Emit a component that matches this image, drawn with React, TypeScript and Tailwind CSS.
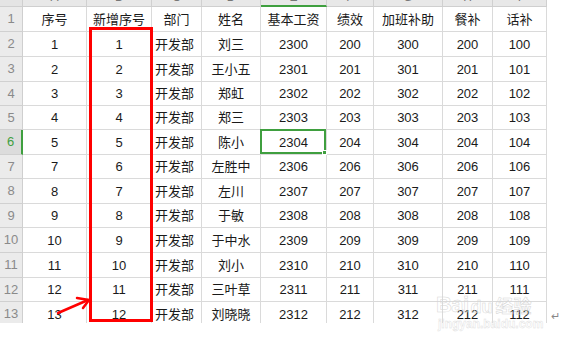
import React from "react";

const cols = [
  { w: "w-[64px]", letter: "A" },
  { w: "w-[65px]", letter: "B" },
  { w: "w-[50px]", letter: "C" },
  { w: "w-[59px]", letter: "D" },
  { w: "w-[66px]", letter: "E" },
  { w: "w-[47px]", letter: "F" },
  { w: "w-[69px]", letter: "G" },
  { w: "w-[50px]", letter: "H" },
  { w: "w-[54px]", letter: "I" },
];

const rowH = [
  "h-[25px]", "h-[25px]", "h-[25px]", "h-[24px]", "h-[24px]", "h-[25px]", "h-[24px]",
  "h-[25px]", "h-[24px]", "h-[25px]", "h-[25px]", "h-[24px]", "h-[25px]",
];

const rows: string[][] = [
  ["序号", "新增序号", "部门", "姓名", "基本工资", "绩效", "加班补助", "餐补", "话补"],
  ["1", "1", "开发部", "刘三", "2300", "200", "300", "200", "100"],
  ["2", "2", "开发部", "王小五", "2301", "201", "301", "201", "101"],
  ["3", "3", "开发部", "郑虹", "2302", "202", "302", "202", "102"],
  ["4", "4", "开发部", "郑三", "2303", "203", "303", "203", "103"],
  ["5", "5", "开发部", "陈小", "2304", "204", "304", "204", "104"],
  ["7", "6", "开发部", "左胜中", "2306", "206", "306", "206", "106"],
  ["8", "7", "开发部", "左川", "2307", "207", "307", "207", "107"],
  ["9", "8", "开发部", "于敏", "2308", "208", "308", "208", "108"],
  ["10", "9", "开发部", "于中水", "2309", "209", "309", "209", "109"],
  ["11", "10", "开发部", "刘小", "2310", "210", "310", "210", "110"],
  ["12", "11", "开发部", "三叶草", "2311", "211", "311", "211", "111"],
  ["13", "12", "开发部", "刘晓晓", "2312", "212", "312", "212", "112"],
];

export default function App() {
  return (
    <div
      className="relative w-[568px] h-[345px] bg-white overflow-hidden text-[#1a1a1a]"
      style={{ fontFamily: '"Liberation Sans", "Noto Sans CJK SC", sans-serif' }}
    >
      <div className="w-[547px] h-[323px] overflow-hidden">
        {/* column letter strip */}
        <div className="flex h-[7px]">
          <div className="w-[23px] h-full bg-[#e4e4e4] border-r border-b border-[#cfcfcf]" />
          {cols.map((c, i) => (
            <div
              key={c.letter}
              className={`${c.w} h-full overflow-hidden bg-[#e8e8e8] border-r border-[#d0d0d0] ${
                i === 4 ? "border-b-2 border-b-[#3f9f3f]" : "border-b border-b-[#cfcfcf]"
              } flex justify-center`}
            >
              <span className="block -mt-[10px] leading-[14px] text-[12px] text-[#777]">{c.letter}</span>
            </div>
          ))}
        </div>
        {rows.map((r, ri) => (
          <div key={ri} className={`flex ${rowH[ri]}`}>
            <div
              className={`w-[23px] h-full flex items-center justify-center text-[13px] border-b border-[#d0d0d0] ${
                ri === 5
                  ? "bg-[#dcdcdc] text-[#3f9f3f] border-r-2 border-r-[#3f9f3f]"
                  : "bg-[#ebebeb] text-[#8a8a8a] border-r border-r-[#cfcfcf]"
              }`}
            >
              {ri + 1}
            </div>
            {r.map((v, ci) => (
              <div
                key={ci}
                className={`${cols[ci].w} relative h-full flex items-center border-r border-b border-[#dadada] text-[13px] leading-none whitespace-nowrap ${
                  ci === 2 && ri > 0 ? "justify-start pl-[3px] text-[13.5px]" : "justify-center"
                } ${ri === 0 ? "text-[13.5px]" : ""}`}
              >
                {v}
                {ri === 5 && ci === 4 && (
                  <div className="absolute -left-[1px] -top-[1px] -right-0 -bottom-0 border-2 border-[#3f9f3f]">
                    <div className="absolute -right-[3px] -bottom-[3px] w-[5px] h-[5px] bg-[#3f9f3f] border border-white" />
                  </div>
                )}
              </div>
            ))}
          </div>
        ))}
      </div>

      {/* red highlight box */}
      <div className="absolute left-[89px] top-[27px] w-[64px] h-[295px] border-[3px] border-[#ff0000]" />

      {/* red arrow */}
      <svg className="absolute left-0 top-0" width="568" height="345">
        <line x1="58" y1="313" x2="88" y2="300" stroke="#ff0000" strokeWidth="2.5" strokeLinecap="round" />
        <polyline
          points="77,298 89,300 83,308"
          fill="none"
          stroke="#ff0000"
          strokeWidth="2.5"
          strokeLinecap="round"
          strokeLinejoin="round"
        />
      </svg>

      {/* watermark */}
      <div className="absolute left-[436px] top-[294px] flex items-end text-[#e2e2e2] leading-none pointer-events-none">
        <span className="text-[22px] font-bold tracking-tight" style={{ WebkitTextStroke: "0.5px #d6d6d6", color: "transparent" }}>
          Bai
        </span>
        <span className="text-[18px] font-bold ml-[2px]" style={{ WebkitTextStroke: "0.5px #d6d6d6", color: "transparent" }}>
          du
        </span>
        <span className="text-[18px] font-bold ml-[3px]" style={{ WebkitTextStroke: "0.5px #d6d6d6", color: "transparent" }}>
          经验
        </span>
      </div>
      <div className="absolute left-[438px] top-[318px] text-[12px] font-bold leading-none" style={{ WebkitTextStroke: "0.4px #dcdcdc", color: "transparent" }}>
        jingyan.baidu.com
      </div>

      {/* return mark */}
      <div className="absolute left-[551px] top-[311px] text-[11px] text-[#888] leading-none">↵</div>
    </div>
  );
}
